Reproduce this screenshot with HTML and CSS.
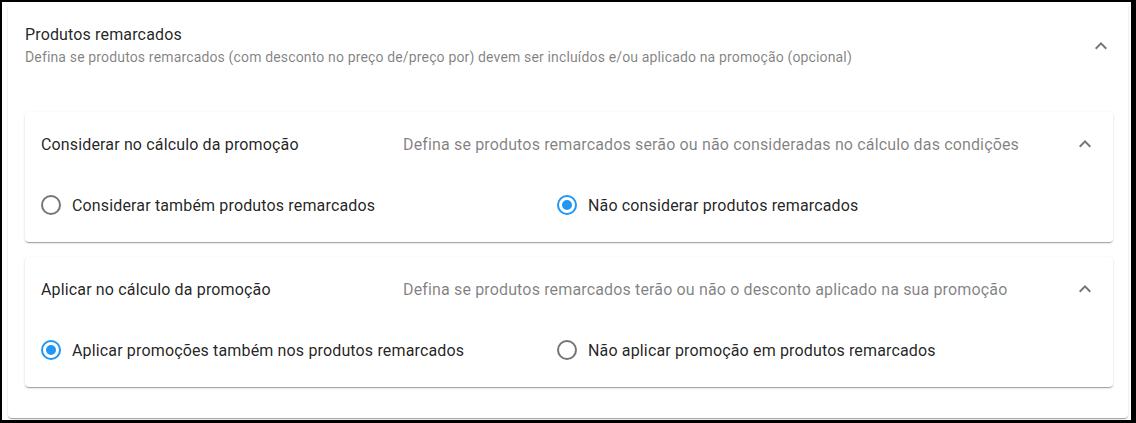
FILE: index.html
```html
<!DOCTYPE html>
<html lang="pt-BR">
<head>
<meta charset="utf-8">
<title>Produtos remarcados</title>
<link rel="stylesheet" href="styles.css">
</head>
<body>
<div class="frame">
  <div class="page">
    <section class="panel">
      <header class="panel-head">
        <div class="panel-titles">
          <div class="panel-title">Produtos remarcados</div>
          <div class="panel-sub">Defina se produtos remarcados (com desconto no preço de/preço por) devem ser incluídos e/ou aplicado na promoção (opcional)</div>
        </div>
        <svg class="chev" viewBox="0 0 24 24"><path d="M7.41,15.41L12,10.83L16.59,15.41L18,14L12,8L6,14L7.41,15.41Z"/></svg>
      </header>
      <div class="panel-body">
        <div class="card">
          <div class="card-head">
            <div class="card-title">Considerar no cálculo da promoção</div>
            <div class="card-desc">Defina se produtos remarcados serão ou não consideradas no cálculo das condições</div>
            <svg class="chev" viewBox="0 0 24 24"><path d="M7.41,15.41L12,10.83L16.59,15.41L18,14L12,8L6,14L7.41,15.41Z"/></svg>
          </div>
          <div class="card-body">
            <label class="radio">
              <svg class="radio-icon off" viewBox="0 0 24 24"><path d="M12,20A8,8 0 0,1 4,12A8,8 0 0,1 12,4A8,8 0 0,1 20,12A8,8 0 0,1 12,20M12,2A10,10 0 0,0 2,12A10,10 0 0,0 12,22A10,10 0 0,0 22,12A10,10 0 0,0 12,2Z"/></svg>
              <span>Considerar também produtos remarcados</span>
            </label>
            <label class="radio">
              <svg class="radio-icon on" viewBox="0 0 24 24"><path d="M12,20A8,8 0 0,1 4,12A8,8 0 0,1 12,4A8,8 0 0,1 20,12A8,8 0 0,1 12,20M12,2A10,10 0 0,0 2,12A10,10 0 0,0 12,22A10,10 0 0,0 22,12A10,10 0 0,0 12,2M12,7A5,5 0 0,0 7,12A5,5 0 0,0 12,17A5,5 0 0,0 17,12A5,5 0 0,0 12,7Z"/></svg>
              <span>Não considerar produtos remarcados</span>
            </label>
          </div>
        </div>
        <div class="card">
          <div class="card-head">
            <div class="card-title">Aplicar no cálculo da promoção</div>
            <div class="card-desc">Defina se produtos remarcados terão ou não o desconto aplicado na sua promoção</div>
            <svg class="chev" viewBox="0 0 24 24"><path d="M7.41,15.41L12,10.83L16.59,15.41L18,14L12,8L6,14L7.41,15.41Z"/></svg>
          </div>
          <div class="card-body">
            <label class="radio">
              <svg class="radio-icon on" viewBox="0 0 24 24"><path d="M12,20A8,8 0 0,1 4,12A8,8 0 0,1 12,4A8,8 0 0,1 20,12A8,8 0 0,1 12,20M12,2A10,10 0 0,0 2,12A10,10 0 0,0 12,22A10,10 0 0,0 22,12A10,10 0 0,0 12,2M12,7A5,5 0 0,0 7,12A5,5 0 0,0 12,17A5,5 0 0,0 17,12A5,5 0 0,0 12,7Z"/></svg>
              <span>Aplicar promoções também nos produtos remarcados</span>
            </label>
            <label class="radio">
              <svg class="radio-icon off" viewBox="0 0 24 24"><path d="M12,20A8,8 0 0,1 4,12A8,8 0 0,1 12,4A8,8 0 0,1 20,12A8,8 0 0,1 12,20M12,2A10,10 0 0,0 2,12A10,10 0 0,0 12,22A10,10 0 0,0 22,12A10,10 0 0,0 12,2Z"/></svg>
              <span>Não aplicar promoção em produtos remarcados</span>
            </label>
          </div>
        </div>
      </div>
    </section>
  </div>
</div>
</body>
</html>
```

FILE: styles.css
```css
* { box-sizing: border-box; }
html, body { margin: 0; padding: 0; }
body {
  background: #000;
  font-family: Roboto, "Liberation Sans", Arial, sans-serif;
  color: rgba(0,0,0,0.87);
}
.frame {
  width: 1136px;
  height: 423px;
  padding: 2px 5px 3px 2px;
  background: #000;
}
.page {
  width: 100%;
  height: 100%;
  background: #fff;
  padding: 1px 0 0 6px;
  overflow: hidden;
}
.panel {
  width: 1120px;
  background: #fff;
  border-radius: 4px;
  box-shadow: 0 2px 1px -1px rgba(0,0,0,0.2), 0 1px 1px 0 rgba(0,0,0,0.14), 0 1px 3px 0 rgba(0,0,0,0.12);
}
.panel-head {
  display: flex;
  align-items: center;
  padding: 22px 15px 21px 17px;
}
.panel-titles { flex: 1; }
.panel-title {
  font-size: 16px;
  line-height: 20px;
  letter-spacing: 0.15px;
  color: rgba(0,0,0,0.87);
}
.panel-sub {
  margin-top: 3px;
  font-size: 14px;
  line-height: 18px;
  letter-spacing: 0.15px;
  color: rgba(0,0,0,0.5);
}
.chev {
  width: 24px;
  height: 24px;
  fill: rgba(0,0,0,0.54);
  flex: none;
}
.panel-body {
  padding: 25px 15px 31px 17px;
  display: flex;
  flex-direction: column;
  gap: 15px;
}
.card {
  background: #fff;
  border-radius: 4px;
  box-shadow: 0 2px 1px -1px rgba(0,0,0,0.2), 0 1px 1px 0 rgba(0,0,0,0.14), 0 1px 3px 0 rgba(0,0,0,0.12);
}
.card-head {
  display: flex;
  align-items: center;
  height: 64px;
  padding: 0 16px;
  font-size: 16px;
  letter-spacing: 0.15px;
}
.card-title {
  width: 362px;
  flex: none;
  color: rgba(0,0,0,0.87);
}
.card-desc {
  flex: 1;
  color: rgba(0,0,0,0.5);
}
.card-body {
  display: grid;
  grid-template-columns: 516px 1fr;
  padding: 17px 16px 25px 14px;
}
.radio {
  display: flex;
  align-items: center;
  height: 24px;
  font-size: 16px;
  letter-spacing: 0.15px;
  color: rgba(0,0,0,0.87);
}
.radio-icon {
  width: 24px;
  height: 24px;
  flex: none;
  margin-right: 9px;
}
.radio-icon.off { fill: rgba(0,0,0,0.54); }
.radio-icon.on { fill: #2196f3; }
```
